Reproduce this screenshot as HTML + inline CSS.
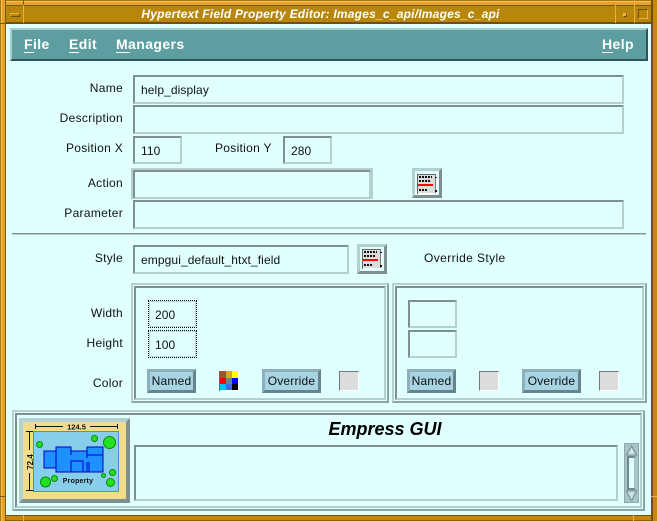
<!DOCTYPE html>
<html><head><meta charset="utf-8"><style>
html,body{margin:0;padding:0;background:#e0ffff}
#w{position:relative;width:657px;height:521px;overflow:hidden;background:#e0ffff;font:12px "Liberation Sans",sans-serif;color:#111}
#w div,#w span.a,#w svg{position:absolute;box-sizing:border-box}
.l{text-align:right;width:110px;left:13px;white-space:nowrap;letter-spacing:.3px}
.f{border:2px solid;border-color:#7f8f8f #b4d0d0 #b4d0d0 #7f8f8f;padding:6px 0 0 6px;white-space:nowrap;letter-spacing:.1px;line-height:14px}
.d{border:1px dotted #000;box-shadow:inset 0 0 0 1px #b8d8e8;padding:7px 0 0 6px;letter-spacing:.1px;line-height:14px}
.b{border:3px solid;border-color:#8fb0bb #68838b #68838b #8fb0bb;background:#a6d4e2;text-align:center;line-height:18px;height:24px;letter-spacing:.2px}
.g{width:20px;height:20px;background:#dcdcdc;border:1px solid;border-color:#707878 #fff #fff #707878;top:371px}
.e{border:2px solid;border-color:#7f8f8f #b4d0d0 #b4d0d0 #7f8f8f}
.e2{border:2px solid;border-color:#b4d0d0 #8fa4a4 #8fa4a4 #b4d0d0}
.ib{width:30px;height:30px;border:3px solid;border-color:#b4d0d0 #7f8f8f #7f8f8f #b4d0d0;background:#e0ffff}
.m{color:#fff;font-weight:bold;font-size:14px;top:36px;line-height:16px;white-space:nowrap;letter-spacing:.4px}
.u{height:1px;background:#fff;top:52px}
</style></head><body><div id="w">

<!-- frame -->
<div style="left:0;top:0;width:657px;height:6px;background:#e8a02c;border-top:1px solid #a87810;border-bottom:1px solid #7a5a10;box-shadow:inset 0 1px #f8c050"></div>
<div style="left:0;top:515px;width:657px;height:6px;background:#c8860e;border-top:1px solid #6e5008;border-bottom:1px solid #8a6008"></div>
<div style="left:0;top:0;width:6px;height:521px;background:#e8a02c;border-left:1px solid #a87810;border-right:1px solid #7a5a10;box-shadow:inset 1px 0 #f8c050"></div>
<div style="left:651px;top:0;width:6px;height:521px;background:#c8860e;border-left:2px solid #6e5008"></div>
<div style="left:0;top:23px;width:6px;height:1px;background:#7a5a10"></div>
<div style="left:23px;top:0;width:1px;height:23px;background:#7a5a10"></div>
<div style="left:634px;top:0;width:1px;height:23px;background:#f0b040"></div>
<div style="left:0;top:496px;width:6px;height:1px;background:#7a5a10"></div>
<div style="left:651px;top:496px;width:6px;height:1px;background:#f0b040"></div>
<div style="left:23px;top:515px;width:1px;height:6px;background:#f0b040"></div>
<div style="left:633px;top:515px;width:1px;height:6px;background:#f0b040"></div>

<!-- title bar -->
<div style="left:6px;top:6px;width:645px;height:18px;background:#b8860b;border-bottom:2px solid #6e5008"></div>
<div style="left:6px;top:5px;width:18px;height:18px;border-right:1px solid #f0b040"></div>
<div style="left:10px;top:13px;width:10px;height:4px;background:#b8860b;border:1px solid;border-color:#f0b040 #6e5008 #6e5008 #f0b040"></div>
<div style="left:615px;top:5px;width:1px;height:18px;background:#f0b040"></div>
<div style="left:634px;top:5px;width:1px;height:18px;background:#f0b040"></div>
<div style="left:623px;top:13px;width:4px;height:4px;background:#f0b040;border:1px solid;border-color:#f0c040 #6e5008 #6e5008 #f0c040"></div>
<div style="left:638px;top:9px;width:10px;height:10px;border:1px solid;border-color:#6e5008 #f0b040 #f0b040 #6e5008"></div>
<div style="left:25px;top:6px;width:591px;height:16px;color:#fff;font:italic bold 12px/17px 'Liberation Sans',sans-serif;letter-spacing:.22px;text-align:center;white-space:nowrap">Hypertext Field Property Editor: Images_c_api/Images_c_api</div>

<!-- menu -->
<div style="left:10px;top:28px;width:638px;height:33px;background:#5f9ea0;border:2px solid;border-color:#a8cfd0 #2f5558 #2f5558 #a8cfd0"></div>
<span class="a m" style="left:24px">File</span><div class="u" style="left:24px;width:10px"></div>
<span class="a m" style="left:69px">Edit</span><div class="u" style="left:69px;width:10px"></div>
<span class="a m" style="left:116px">Managers</span><div class="u" style="left:116px;width:14px"></div>
<span class="a m" style="left:602px">Help</span><div class="u" style="left:602px;width:11px"></div>

<!-- rows -->
<div class="l" style="top:81px">Name</div>
<div class="f" style="left:133px;top:75px;width:491px;height:29px">help_display</div>
<div class="l" style="top:111px">Description</div>
<div class="f" style="left:133px;top:105px;width:491px;height:29px"></div>
<div class="l" style="top:141px">Position X</div>
<div class="f" style="left:133px;top:136px;width:49px;height:28px">110</div>
<div class="a" style="left:215px;top:141px;letter-spacing:.3px;white-space:nowrap">Position Y</div>
<div class="f" style="left:283px;top:136px;width:49px;height:28px">280</div>
<div class="l" style="top:176px">Action</div>
<div style="left:131px;top:168px;width:242px;height:31px;border:2px solid #b4d0d0;border-bottom:0"></div>
<div style="left:133px;top:170px;width:238px;height:29px;border:2px solid;border-color:#7f8f8f #b4d0d0 #b4d0d0 #7f8f8f"></div>
<div class="l" style="top:206px">Parameter</div>
<div class="f" style="left:133px;top:200px;width:491px;height:29px"></div>
<div style="left:12px;top:233px;width:634px;height:1px;background:#7f8f8f"></div>
<div style="left:12px;top:234px;width:634px;height:1px;background:#b4d0d0"></div>

<div class="ib" style="left:412px;top:168px"><svg style="left:2px;top:3px" width="20" height="20" viewBox="0 0 20 20" shape-rendering="crispEdges"><rect width="20" height="20" fill="#fff"/><rect x="1" y="1" width="18" height="18" fill="#dcdcdc"/><path d="M.5 20V.5H19" stroke="#666" fill="none"/><path d="M2 3h13M2 7h11M2 16h9" stroke="#111" stroke-width="2" stroke-dasharray="2 1" fill="none"/><rect x="1" y="10" width="15" height="2" fill="#f00"/><rect x="18" y="1" width="1" height="18" fill="#777"/><rect x="18" y="3" width="2" height="1" fill="#111"/><rect x="18" y="16" width="2" height="2" fill="#111"/></svg></div>

<div class="l" style="top:251px">Style</div>
<div class="f" style="left:133px;top:245px;width:216px;height:29px">empgui_default_htxt_field</div>
<div class="ib" style="left:357px;top:244px"><svg style="left:2px;top:2px" width="20" height="20" viewBox="0 0 20 20" shape-rendering="crispEdges"><rect width="20" height="20" fill="#fff"/><rect x="1" y="1" width="18" height="18" fill="#dcdcdc"/><path d="M.5 20V.5H19" stroke="#666" fill="none"/><path d="M2 3h13M2 7h11M2 16h9" stroke="#111" stroke-width="2" stroke-dasharray="2 1" fill="none"/><rect x="1" y="10" width="15" height="2" fill="#f00"/><rect x="18" y="1" width="1" height="18" fill="#777"/><rect x="18" y="3" width="2" height="1" fill="#111"/><rect x="18" y="16" width="2" height="2" fill="#111"/></svg></div>
<div class="a" style="left:424px;top:251px;letter-spacing:.4px;white-space:nowrap">Override Style</div>

<!-- left panel -->
<div class="e2" style="left:131px;top:283px;width:258px;height:120px"></div>
<div class="e" style="left:134px;top:286px;width:252px;height:114px"></div>
<div class="l" style="top:306px">Width</div>
<div class="l" style="top:336px">Height</div>
<div class="l" style="top:376px">Color</div>
<div class="d" style="left:148px;top:300px;width:49px;height:28px">200</div>
<div class="d" style="left:148px;top:330px;width:49px;height:28px">100</div>
<div class="b" style="left:147px;top:369px;width:49px">Named</div>
<svg style="left:219px;top:371px" width="20" height="20" viewBox="0 0 20 20" shape-rendering="crispEdges"><rect width="20" height="20" fill="#fff"/><rect width="7" height="7" fill="#a0522d"/><rect x="7" width="6" height="7" fill="#daa520"/><rect x="13" width="6" height="7" fill="#ff0"/><rect y="7" width="7" height="6" fill="#f00"/><rect x="7" y="7" width="6" height="6" fill="#708090"/><rect x="13" y="7" width="6" height="6" fill="#00f"/><rect y="13" width="7" height="6" fill="#00bfff"/><rect x="7" y="13" width="6" height="6" fill="#4169e1"/><rect x="13" y="13" width="6" height="6" fill="#000"/><rect width="1" height="20" fill="#666"/></svg>
<div class="b" style="left:262px;top:369px;width:59px">Override</div>
<div class="g" style="left:339px"></div>

<!-- right panel -->
<div class="e2" style="left:392px;top:283px;width:255px;height:120px"></div>
<div class="e" style="left:395px;top:286px;width:249px;height:114px"></div>
<div class="f" style="left:408px;top:300px;width:49px;height:28px"></div>
<div class="f" style="left:408px;top:330px;width:49px;height:28px"></div>
<div class="b" style="left:407px;top:369px;width:49px">Named</div>
<div class="g" style="left:479px"></div>
<div class="b" style="left:522px;top:369px;width:59px">Override</div>
<div class="g" style="left:599px"></div>

<!-- bottom panel -->
<div class="e2" style="left:12px;top:410px;width:633px;height:101px"></div>
<div class="e" style="left:15px;top:413px;width:627px;height:95px"></div>
<div style="left:19px;top:418px;width:111px;height:85px;border:4px solid;border-color:#b4d0d0 #7f8f8f #7f8f8f #b4d0d0"></div>
<svg style="left:23px;top:422px" width="103" height="77" viewBox="0 0 103 77">
<rect width="103" height="77" fill="#f0dc8c"/>
<rect x="10.500" y="9.500" width="85" height="60" fill="#87ceeb" stroke="#4a90d0"/>
<path d="M12 4.500H40M67 4.500H95M12.500 2v5M94.500 2v5M6.500 10V28M6.500 51V68M3 9.500h7M3 68.500h7" stroke="#111" stroke-width="1" fill="none"/>
<text x="53.500" y="7.500" font-family="'Liberation Sans',sans-serif" font-size="7.500" font-weight="bold" text-anchor="middle" fill="#111">124.5</text>
<text transform="translate(10,40) rotate(-90)" font-family="'Liberation Sans',sans-serif" font-size="8" font-weight="bold" text-anchor="middle" fill="#111">72.4</text>
<path d="M21 29H33V46H21ZM33 25H48V29H64V25H80V50H33ZM48 39H60V50H48ZM64 33H80" fill="#1e90ff" stroke="#0000c8" stroke-width="1"/>
<path d="M64 25V36M66 40V50M60 39V50M48 29V33M64 40V50" stroke="#0000c8" fill="none"/>
<g fill="#22e022" stroke="#0a8a0a"><circle cx="16.500" cy="22.500" r="3"/><circle cx="71.500" cy="16.500" r="3"/><circle cx="86.500" cy="20.500" r="6"/><circle cx="22.500" cy="60" r="5"/><circle cx="31.500" cy="56.500" r="3"/><circle cx="80.500" cy="53.500" r="2"/><circle cx="89.500" cy="50.500" r="3"/><circle cx="87.500" cy="60.500" r="4"/></g>
<text x="55" y="61" font-family="'Liberation Sans',sans-serif" font-size="7" font-weight="bold" letter-spacing=".2" text-anchor="middle" fill="#111">Property</text>
</svg>
<div style="left:134px;top:419px;width:502px;text-align:center;font:italic bold 18px/20px 'Liberation Sans',sans-serif;color:#000">Empress GUI</div>
<div style="left:134px;top:445px;width:484px;height:56px;border:2px solid;border-color:#7f8f8f #b4d0d0 #b4d0d0 #7f8f8f"></div>
<!-- scrollbar -->
<div style="left:624px;top:443px;width:15px;height:60px;background:#a8c4c8;border:1px solid #8fa8ac"></div>
<div style="left:627px;top:456px;width:9px;height:34px;background:#e0ffff;border:2px solid;border-color:#70888c #a8c4c8 #70888c #70888c"></div>
<svg style="left:625px;top:445px" width="13" height="56" viewBox="0 0 13 56"><path d="M6.500 1L11.500 10H1.500Z" fill="#c8e4e4" stroke="#70888c"/><path d="M1.500 46H11.500L7 55H6Z" fill="#c8e4e4" stroke="#70888c"/></svg>
</div></body></html>
